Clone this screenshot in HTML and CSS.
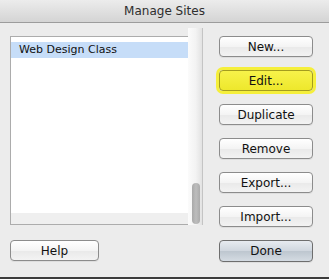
FILE: index.html
```html
<!DOCTYPE html>
<html>
<head>
<meta charset="utf-8">
<title>Manage Sites</title>
<link rel="stylesheet" href="styles.css">
</head>
<body>
<div class="window">
	<div class="titlebar">Manage Sites</div>
	<div class="main">
		<div class="left">
			<div class="sites">
				<div class="list">
					<ul class="rows">
						<li class="row selected">Web Design Class</li>
					</ul>
					<div class="list-foot"></div>
				</div>
				<div class="scroll"><div class="thumb"></div></div>
			</div>
			<button class="btn help">Help</button>
		</div>
		<div class="actions">
			<button class="btn">New...</button>
			<button class="btn marked">Edit...</button>
			<button class="btn">Duplicate</button>
			<button class="btn">Remove</button>
			<button class="btn">Export...</button>
			<button class="btn">Import...</button>
			<button class="btn done">Done</button>
		</div>
	</div>
</div>
</body>
</html>
```

FILE: styles.css
```css
body {
	margin: 0;
	background: #ececec;
	font-family: "DejaVu Sans", Verdana, sans-serif;
	color: #111;
}

.window {
	width: 329px;
	height: 279px;
	box-sizing: border-box;
	border-bottom: 2px solid #3c3c3c;
	display: flex;
	flex-direction: column;
}

.titlebar {
	height: 22px;
	line-height: 22px;
	text-align: center;
	font-size: 12px;
	color: #2e2e2e;
	background: linear-gradient(#ececec, #d4d4d4);
	border-bottom: 1px solid #9c9c9c;
}

.main {
	display: flex;
	padding-left: 10px;
}

.left {
	display: flex;
	flex-direction: column;
	width: 193px;
}

.sites {
	display: flex;
	align-items: flex-end;
	margin-top: 5px;
}

.list {
	width: 178px;
	height: 189px;
	box-sizing: border-box;
	border: 1px solid #acacac;
	border-right: none;
	background: #fff;
	display: flex;
	flex-direction: column;
}

.rows {
	list-style: none;
	margin: 0;
	padding: 5px 0 0;
	flex: 1;
}

.row {
	height: 16px;
	line-height: 16px;
	padding-left: 8px;
	font-size: 11px;
}

.row.selected {
	background: #c6ddf8;
}

.list-foot {
	height: 11px;
	background: #efefef;
}

.scroll {
	width: 15px;
	height: 197px;
	box-sizing: border-box;
	border-right: 1px solid #c4c4c4;
	background: linear-gradient(to right, #fbfbfb, #f3f3f3 55%, #e2e2e2);
	display: flex;
	flex-direction: column;
	justify-content: flex-end;
	padding: 0 0 1px 4px;
}

.thumb {
	width: 8px;
	height: 41px;
	border-radius: 4px;
	background: linear-gradient(to right, #a9a9a9, #bdbdbd, #ababab);
}

.btn {
	display: block;
	height: 21px;
	padding: 0;
	box-sizing: border-box;
	border: 1px solid #8c8c8c;
	border-radius: 4px;
	background: linear-gradient(#ffffff, #f4f4f4 50%, #e9e9e9 51%, #f3f3f3);
	box-shadow: 0 1px 0 rgba(0, 0, 0, 0.06);
	font-family: inherit;
	font-size: 12px;
	color: #111;
}

.help {
	width: 89px;
	margin-top: 15px;
}

.actions {
	display: flex;
	flex-direction: column;
	gap: 13px;
	margin-left: 16px;
	padding-top: 13px;
}

.actions .btn {
	width: 94px;
}

.btn.marked {
	border-color: #a49d1e;
	background: linear-gradient(#f7f24a, #eee82c);
	box-shadow: 0 0 0 3px #f5ef3b;
}

.btn.done {
	height: 22px;
	border-color: #6e6e6e;
	background: linear-gradient(#e7ebf0, #cfd6de 50%, #bdc6cf 51%, #d4dbe2);
}
```
